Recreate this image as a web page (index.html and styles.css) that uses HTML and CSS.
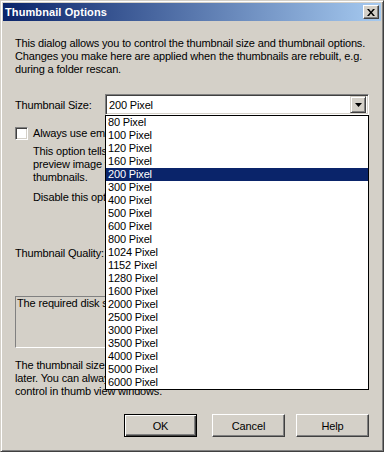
FILE: index.html
```html
<!DOCTYPE html>
<html>
<head>
<meta charset="utf-8">
<link rel="stylesheet" href="styles.css">
</head>
<body>
<div class="window">
  <div class="titlebar">
    <span class="title">Thumbnail Options</span>
    <span class="close"><svg width="8" height="7" viewBox="0 0 8 7"><path d="M0 0h2l2 2.5L6 0h2L5 3.5 8 7H6L4 4.5 2 7H0l3-3.5z" fill="#000"/></svg></span>
  </div>
  <div class="content">
    <p class="intro">This dialog allows you to control the thumbnail size and thumbnail options.<br>Changes you make here are applied when the thumbnails are rebuilt, e.g.<br>during a folder rescan.</p>

    <div class="size-row">
      <span class="label">Thumbnail Size:</span>
      <div class="combo">
        <div class="combo-field">
          <span class="combo-text">200 Pixel</span>
          <span class="combo-btn"><svg width="7" height="4" viewBox="0 0 7 4"><path d="M0 0h7L3.5 4z" fill="#000"/></svg></span>
        </div>
        <ul class="dropdown">
          <li>80 Pixel</li>
          <li>100 Pixel</li>
          <li>120 Pixel</li>
          <li>160 Pixel</li>
          <li class="selected">200 Pixel</li>
          <li>300 Pixel</li>
          <li>400 Pixel</li>
          <li>500 Pixel</li>
          <li>600 Pixel</li>
          <li>800 Pixel</li>
          <li>1024 Pixel</li>
          <li>1152 Pixel</li>
          <li>1280 Pixel</li>
          <li>1600 Pixel</li>
          <li>2000 Pixel</li>
          <li>2500 Pixel</li>
          <li>3000 Pixel</li>
          <li>3500 Pixel</li>
          <li>4000 Pixel</li>
          <li>5000 Pixel</li>
          <li>6000 Pixel</li>
        </ul>
      </div>
    </div>

    <div class="check-row">
      <span class="checkbox"></span>
      <span class="check-label">Always use embedded preview images</span>
    </div>
    <p class="desc">This option tells the program to use an embedded<br>preview image when one is present, which speeds up<br>thumbnails.</p>
    <p class="desc disable">Disable this option for best quality.</p>

    <div class="quality-row">Thumbnail Quality:</div>

    <div class="infobox">The required disk space for thumbnails is shown here.</div>

    <p class="note">The thumbnail size stored in the database can be changed<br>later. You can always adjust the displayed size with the size<br>control in thumb view windows.</p>

    <div class="buttons">
      <span class="btn default">OK</span>
      <span class="btn cancel">Cancel</span>
      <span class="btn">Help</span>
    </div>
  </div>
</div>
</body>
</html>
```
FILE: styles.css
```css
html, body {
  margin: 0;
  padding: 0;
  background: #d4d0c8;
}
body {
  font-family: "Liberation Sans", Arial, sans-serif;
  font-size: 11px;
  letter-spacing: -0.15px;
  color: #000;
}
.window {
  position: relative;
  width: 384px;
  height: 452px;
  box-sizing: border-box;
  background: #d4d0c8;
  border: 1px solid;
  border-color: #d4d0c8 #404040 #404040 #d4d0c8;
  box-shadow: inset 1px 1px #fff, inset -1px -1px #808080;
  padding: 2px;
  overflow: hidden;
}
.titlebar {
  height: 18px;
  display: flex;
  align-items: center;
  justify-content: space-between;
  padding: 0 2px;
  background: linear-gradient(to right, #0a246a, #a6caf0);
}
.title {
  color: #fff;
  font-weight: bold;
  font-size: 11px;
  letter-spacing: 0.1px;
  white-space: nowrap;
}
.close {
  width: 16px;
  height: 14px;
  box-sizing: border-box;
  background: #d4d0c8;
  border: 1px solid;
  border-color: #fff #404040 #404040 #fff;
  box-shadow: inset -1px -1px #808080;
  display: flex;
  align-items: center;
  justify-content: center;
  padding-right: 1px;
}
.close svg { display: block; }
.content {
  padding: 0 12px;
}
p { margin: 0; }
.intro {
  margin-top: 16px;
  line-height: 13px;
  white-space: nowrap;
}
.size-row {
  margin-top: 18px;
  height: 21px;
  display: flex;
  align-items: center;
}
.label {
  width: 90px;
  flex: none;
  white-space: nowrap;
}
.combo {
  position: relative;
  width: 264px;
  height: 21px;
}
.combo-field {
  height: 21px;
  box-sizing: border-box;
  background: #fff;
  border: 1px solid;
  border-color: #808080 #fff #fff #808080;
  box-shadow: inset 1px 1px #404040, inset -1px -1px #d4d0c8;
  padding: 2px 2px 2px 3px;
  display: flex;
  align-items: center;
  justify-content: space-between;
}
.combo-btn {
  width: 16px;
  height: 17px;
  box-sizing: border-box;
  background: #d4d0c8;
  border: 1px solid;
  border-color: #d4d0c8 #404040 #404040 #d4d0c8;
  box-shadow: inset 1px 1px #fff, inset -1px -1px #808080;
  display: flex;
  align-items: center;
  justify-content: center;
}
.combo-btn svg { display: block; }
.dropdown {
  position: absolute;
  z-index: 5;
  top: 21px;
  left: 0;
  width: 264px;
  box-sizing: border-box;
  margin: 0;
  padding: 0;
  list-style: none;
  background: #fff;
  border: 1px solid #000;
}
.dropdown li {
  height: 13px;
  line-height: 13px;
  padding-left: 2px;
  white-space: nowrap;
}
.dropdown li.selected {
  background: #0a246a;
  color: #fff;
}
.check-row {
  margin-top: 12px;
  height: 13px;
  display: flex;
  align-items: center;
}
.checkbox {
  width: 13px;
  height: 13px;
  flex: none;
  box-sizing: border-box;
  background: #fff;
  border: 1px solid;
  border-color: #808080 #fff #fff #808080;
  box-shadow: inset 1px 1px #404040, inset -1px -1px #d4d0c8;
}
.check-label {
  margin-left: 5px;
  white-space: nowrap;
  line-height: 13px;
}
.desc {
  margin-top: 5px;
  padding-left: 18px;
  line-height: 13px;
  white-space: nowrap;
}
.desc.disable {
  margin-top: 7px;
}
.quality-row {
  margin-top: 43px;
  line-height: 13px;
  white-space: nowrap;
}
.infobox {
  margin-top: 36px;
  height: 52px;
  box-sizing: border-box;
  border: 1px solid;
  border-color: #808080 #fff #fff #808080;
  padding: 0 0 0 1px;
  line-height: 13px;
  white-space: nowrap;
  overflow: hidden;
}
.note {
  margin-top: 11px;
  line-height: 13px;
  white-space: nowrap;
}
.buttons {
  margin-top: 16px;
  display: flex;
  justify-content: flex-end;
}
.btn {
  width: 73px;
  height: 23px;
  box-sizing: border-box;
  background: #d4d0c8;
  border: 1px solid;
  border-color: #fff #404040 #404040 #fff;
  box-shadow: inset -1px -1px #808080;
  display: flex;
  align-items: center;
  justify-content: center;
}
.btn.default {
  border-color: #000;
  box-shadow: inset 1px 1px #fff, inset -1px -1px #404040, inset -2px -2px #808080;
  margin-right: 15px;
}
.btn.cancel {
  margin-right: 11px;
}
```
